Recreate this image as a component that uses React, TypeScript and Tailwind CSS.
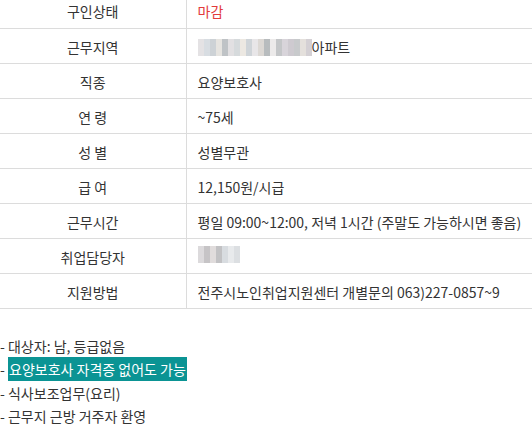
const rows: { label: string; value: React.ReactNode }[] = [
  { label: '구인상태', value: <span className="text-[#e23b3b]">마감</span> },
  {
    label: '근무지역',
    value: (
      <span className="flex items-center">
        <Blur colors={['#e4e2e4', '#d8dde2', '#cdd2d6', '#e6e4e0', '#bfc3c6', '#e2e0e2', '#d6dadc', '#ece8e2', '#cfd4d8', '#e8e6e8', '#dcd8d4', '#b8bcbe', '#eceaea', '#c4c6c8', '#d8d4da', '#cecad0', '#c8cacc', '#e4e0dc', '#d4d0d4']} />
        아파트
      </span>
    ),
  },
  { label: '직종', value: '요양보호사' },
  { label: '연 령', value: '~75세' },
  { label: '성 별', value: '성별무관' },
  { label: '급 여', value: '12,150원/시급' },
  { label: '근무시간', value: '평일 09:00~12:00, 저녁 1시간 (주말도 가능하시면 좋음)' },
  { label: '취업담당자', value: <Blur colors={['#dcdadc', '#c6c4c6', '#e0dcdc', '#c2c2c4', '#d8dce0', '#e8eaec', '#dcdfe2']} /> },
  { label: '지원방법', value: '전주시노인취업지원센터 개별문의 063)227-0857~9' },
];

function Blur({ colors }: { colors: string[] }) {
  return (
    <span className="inline-flex h-[17px]">
      {colors.map((c, i) => (
        <span key={i} className="w-[6px] h-full" style={{ background: c }} />
      ))}
    </span>
  );
}

export default function App() {
  return (
    <div className="w-[532px] h-[430px] overflow-hidden bg-white text-[#333] text-[14px] font-['Noto_Sans_CJK_KR','Noto_Sans',sans-serif]">
      <table className="w-full border-collapse -mt-[7px]">
        <tbody>
          {rows.map((r) => (
            <tr key={r.label} className="border-b border-[#dcdcdc] h-[35px]">
              <td className="w-[186px] border-r border-[#dcdcdc] text-center pt-[3px]">{r.label}</td>
              <td className="pl-[11px] pt-[3px]">{r.value}</td>
            </tr>
          ))}
        </tbody>
      </table>
      <ul className="mt-[26px] leading-[23.5px]">
        <li>- 대상자: 남, 등급없음</li>
        <li>
          - <span className="bg-[#0b9494] text-white px-[1px] py-[2px]">요양보호사 자격증 없어도 가능</span>
        </li>
        <li>- 식사보조업무(요리)</li>
        <li>- 근무지 근방 거주자 환영</li>
      </ul>
    </div>
  );
}
